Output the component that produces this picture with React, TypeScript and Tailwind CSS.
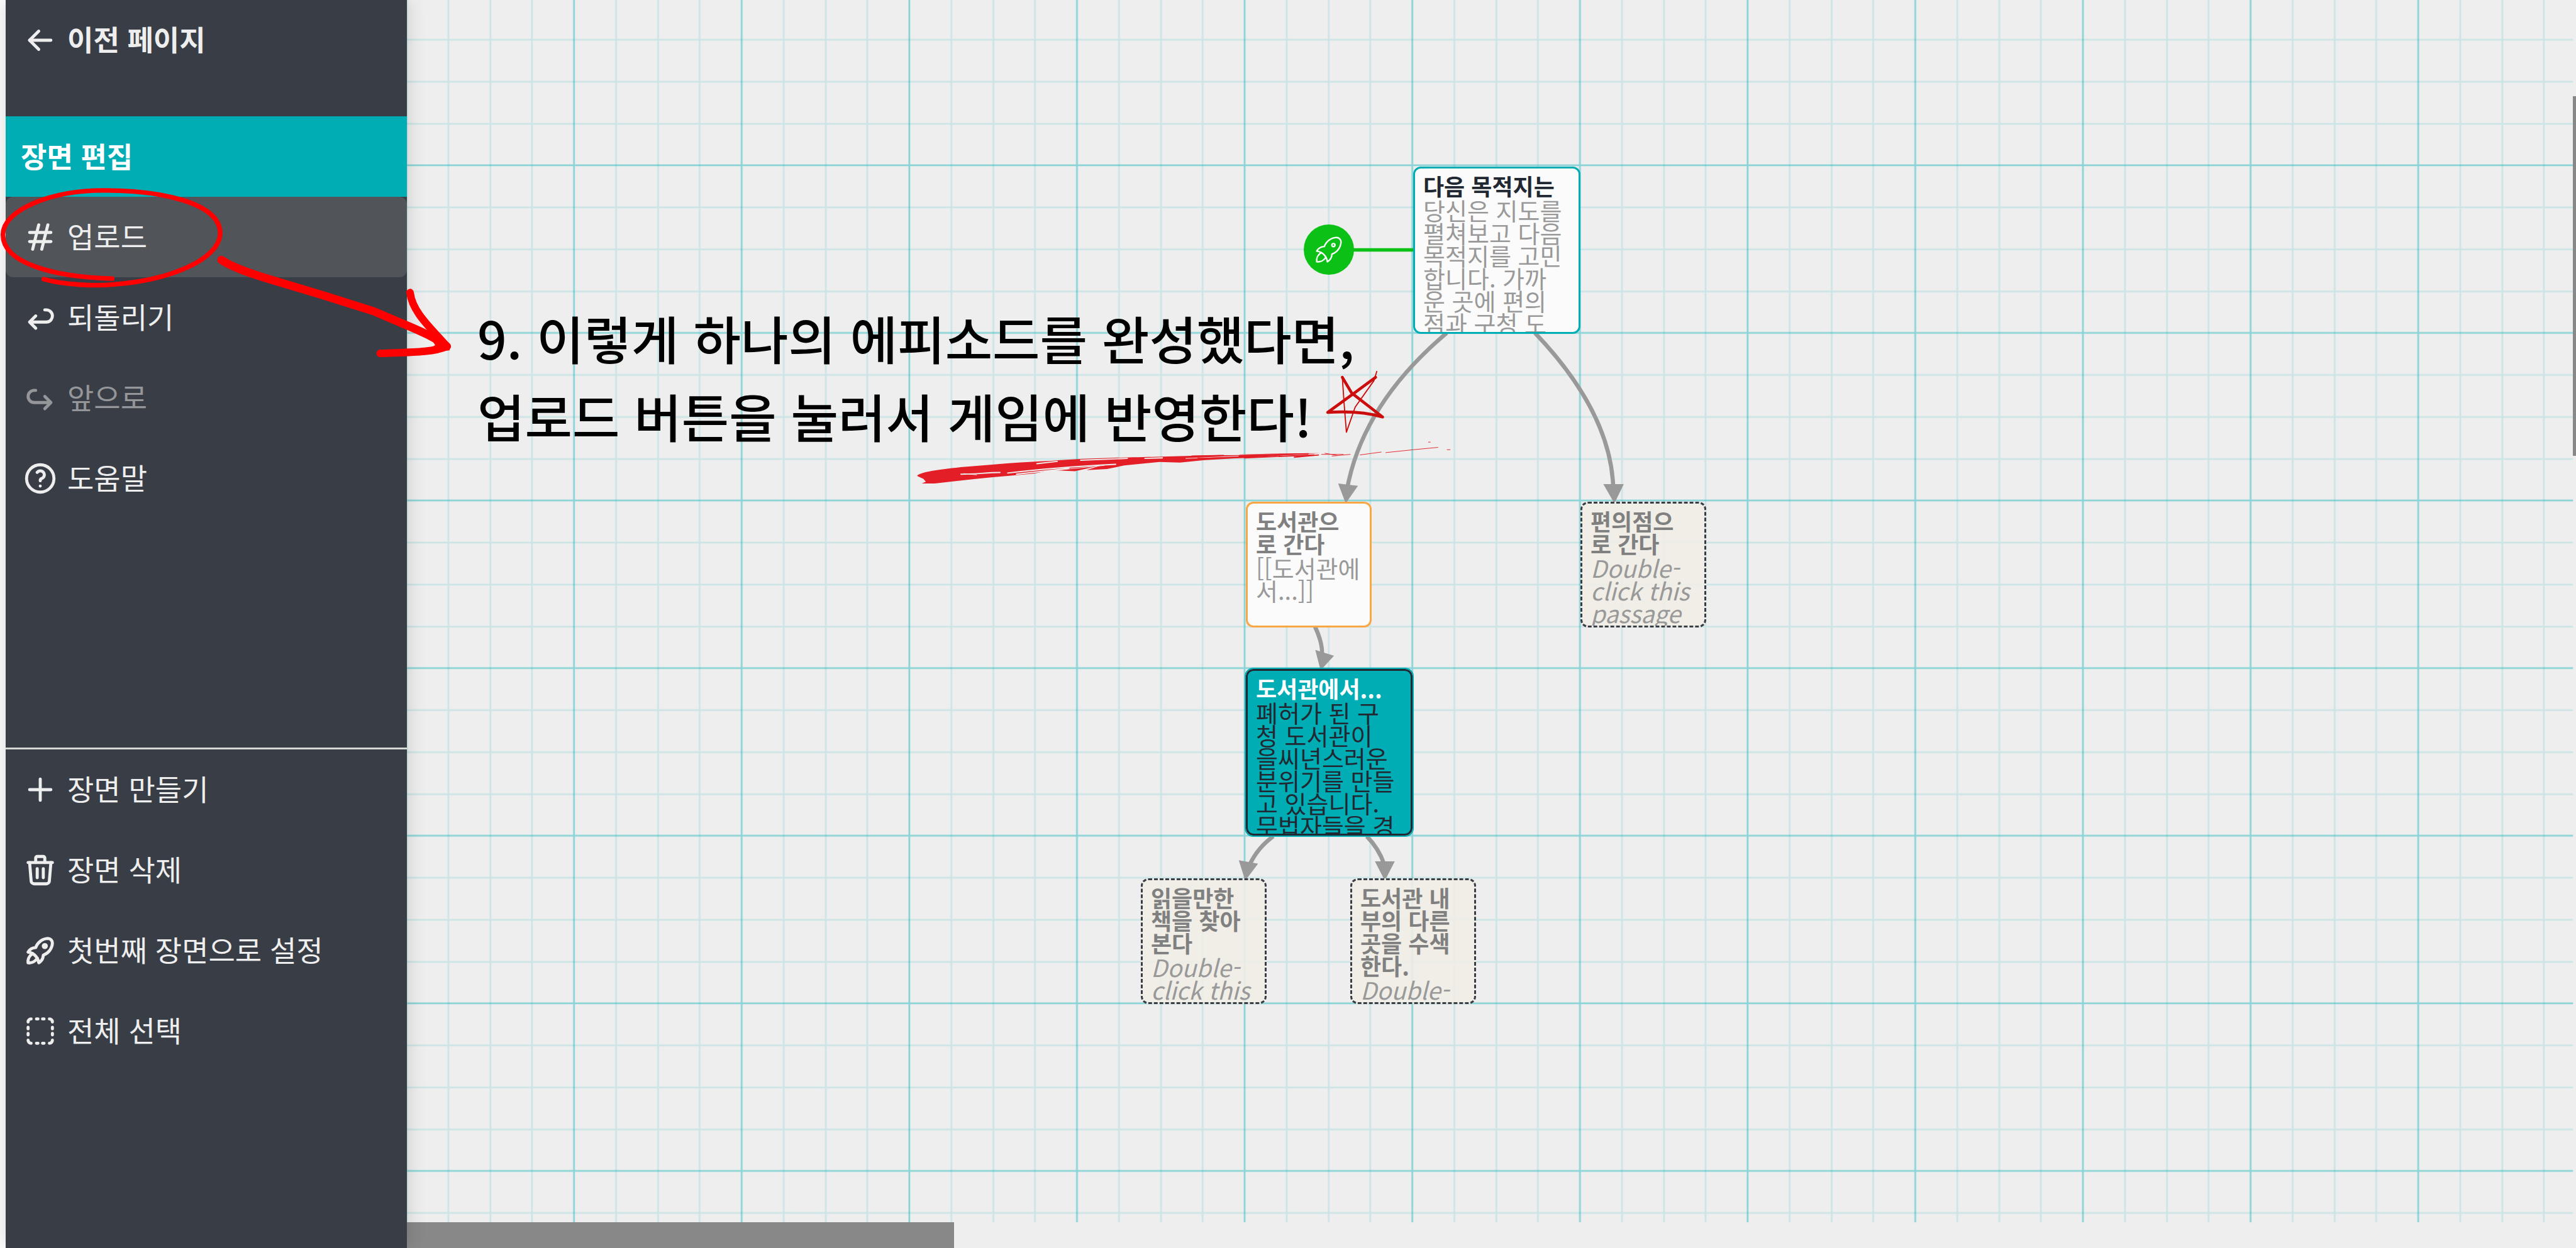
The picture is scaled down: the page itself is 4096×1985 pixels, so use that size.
import type { ReactNode } from "react";

type IconName = "back" | "hash" | "undo" | "redo" | "help" | "plus" | "trash" | "rocket" | "select";

const iconPaths: Record<IconName, string[]> = {
  back: ["M5 12h14", "M5 12l6 6", "M5 12l6-6"],
  hash: ["M5 9h14", "M5 15h14", "M11 4L7 20", "M17 4l-4 16"],
  undo: ["M9 11l-4 4l4 4m-4-4h11a4 4 0 0 0 0-8h-1"],
  redo: ["M15 11l4 4l-4 4m4-4H8a4 4 0 0 1 0-8h1"],
  help: [
    "M3 12a9 9 0 1 0 18 0a9 9 0 1 0-18 0",
    "M12 17v.01",
    "M12 13.5a1.5 1.5 0 0 1 1-1.5a2.6 2.6 0 1 0-3-4",
  ],
  plus: ["M12 5v14", "M5 12h14"],
  trash: [
    "M4 7h16",
    "M10 11v6",
    "M14 11v6",
    "M5 7l1 12a2 2 0 0 0 2 2h8a2 2 0 0 0 2-2l1-12",
    "M9 7V4a1 1 0 0 1 1-1h4a1 1 0 0 1 1 1v3",
  ],
  rocket: [
    "M4 13a8 8 0 0 1 7 7a6 6 0 0 0 3-5a9 9 0 0 0 6-8a3 3 0 0 0-3-3a9 9 0 0 0-8 6a6 6 0 0 0-5 3",
    "M7 14a6 6 0 0 0-3 6a6 6 0 0 0 6-3",
    "M14 9a1 1 0 1 0 2 0a1 1 0 1 0-2 0",
  ],
  select: [
    "M4 6a2 2 0 0 1 2-2",
    "M18 4a2 2 0 0 1 2 2",
    "M20 18a2 2 0 0 1-2 2",
    "M6 20a2 2 0 0 1-2-2",
    "M9.5 4h1M13.5 4h1M9.5 20h1M13.5 20h1",
    "M4 9.500v1M4 13.500v1M20 9.500v1M20 13.500v1",
  ],
};

function Icon({ name, className, weight = 2 }: { name: IconName; className: string; weight?: number }) {
  return (
    <svg
      viewBox="0 0 24 24"
      fill="none"
      stroke="currentColor"
      strokeWidth={weight}
      strokeLinecap="round"
      strokeLinejoin="round"
      className={className}
      aria-hidden="true"
    >
      {iconPaths[name].map((d) => (
        <path key={d} d={d} />
      ))}
    </svg>
  );
}

type Tone = "plain" | "active" | "disabled" | "strong";

const toneClasses: Record<Tone, string> = {
  plain: "text-[46px] text-[#eeeeee]",
  active: "rounded-[12px] bg-[#515459] text-[46px] text-[#eeeeee]",
  disabled: "text-[46px] text-[#949699]",
  strong: "text-[45px] font-bold text-[#eeeeee]",
};

function MenuButton({ icon, tone = "plain", children }: { icon: IconName; tone?: Tone; children: ReactNode }) {
  return (
    <button
      type="button"
      disabled={tone === "disabled"}
      className={`flex h-32 w-full items-center gap-[14px] pl-[26px] text-left leading-none whitespace-nowrap ${toneClasses[tone]}`}
    >
      <Icon name={icon} className="size-[58px] shrink-0" />
      <span className="pb-[6px]">{children}</span>
    </button>
  );
}

function Sidebar() {
  return (
    <aside className="relative z-10 flex w-[638px] shrink-0 flex-col bg-[#393e46] shadow-[0_0_28px_rgba(0,0,0,0.16)]">
      <MenuButton icon="back" tone="strong">이전 페이지</MenuButton>
      <h1 className="mt-[57px] flex h-32 items-center bg-[#00adb5] pb-1 pl-[24px] text-[45px] leading-none font-bold text-white">
        장면 편집
      </h1>
      <nav>
        <MenuButton icon="hash" tone="active">업로드</MenuButton>
        <MenuButton icon="undo">되돌리기</MenuButton>
        <MenuButton icon="redo" tone="disabled">앞으로</MenuButton>
        <MenuButton icon="help">도움말</MenuButton>
      </nav>
      <nav className="mt-[364px] border-t-[3px] border-[#d6d8d6]">
        <MenuButton icon="plus">장면 만들기</MenuButton>
        <MenuButton icon="trash">장면 삭제</MenuButton>
        <MenuButton icon="rocket">첫번째 장면으로 설정</MenuButton>
        <MenuButton icon="select">전체 선택</MenuButton>
      </nav>
    </aside>
  );
}

function GridAndLinks() {
  return (
    <svg viewBox="697 0 3713 2137" className="absolute top-0 left-0 h-[1985px] w-[3449px]" aria-hidden="true">
      <defs>
        <pattern id="grid" x="981" y="-6" width="287" height="287" patternUnits="userSpaceOnUse">
          <path d="M74 0V287M146 0V287M217 0V287M0 74H287M0 146H287M0 218H287" stroke="#00adb5" strokeOpacity="0.14" strokeWidth="3" />
          <path d="M2 0V287M0 2H287" stroke="#00adb5" strokeOpacity="0.42" strokeWidth="3" />
        </pattern>
      </defs>
      <rect x="690" y="0" width="3715" height="2093" fill="url(#grid)" />
      <g fill="none" stroke="#999999" strokeWidth="7">
        <path d="M2477 570Q2335 690 2307 834" />
        <path d="M2628 570Q2757 705 2762 834" />
        <path d="M2251 1072Q2266 1104 2263 1124" />
        <path d="M2180 1432Q2153 1452 2140 1480" />
        <path d="M2340 1432Q2360 1452 2370 1480" />
      </g>
      <g fill="#999999">
        <path d="M2291 828L2325 832L2304 862Z" />
        <path d="M2745 829H2780L2764 862Z" />
        <path d="M2252 1113L2284 1123L2261 1148Z" />
        <path d="M2121 1473L2154 1479L2132 1508Z" />
        <path d="M2354 1475H2388L2371 1508Z" />
      </g>
      <path d="M2275 428H2420" stroke="#0cc115" strokeWidth="6" />
    </svg>
  );
}

type Passage = {
  id: string;
  box: string;
  titleClass: string;
  title: string[];
  bodyClass: string;
  body: string[];
};

const passages: Passage[] = [
  {
    id: "next-destination",
    box: "left-[1600px] top-[265px] size-[266px] border-[#00adb5] bg-[#fbfbfb]",
    titleClass: "text-[#222831]",
    title: ["다음 목적지는"],
    bodyClass: "text-[#999999]",
    body: ["당신은 지도를", "펼쳐보고 다음", "목적지를 고민", "합니다. 가까", "운 곳에 편의", "점과 구청 도"],
  },
  {
    id: "go-library",
    box: "left-[1334px] top-[798px] size-[200px] border-[#f9a644] bg-[#fbfbfb]",
    titleClass: "text-[#808080]",
    title: ["도서관으", "로 간다"],
    bodyClass: "text-[#999999]",
    body: ["[[도서관에", "서...]]"],
  },
  {
    id: "go-store",
    box: "left-[1866px] top-[798px] size-[200px] border-dashed border-[#393e46] bg-[#f0ede6]/90",
    titleClass: "text-[#808080]",
    title: ["편의점으", "로 간다"],
    bodyClass: "text-[#999999] italic",
    body: ["Double-", "click this", "passage"],
  },
  {
    id: "in-library",
    box: "left-[1334px] top-[1064px] size-[265px] border-[#222831] bg-[#00adb5] outline-2 outline-[#00adb5]",
    titleClass: "text-white",
    title: ["도서관에서..."],
    bodyClass: "text-[#222831]",
    body: ["폐허가 된 구", "청 도서관이", "을씨년스러운", "분위기를 만들", "고 있습니다.", "무법자들을 경"],
  },
  {
    id: "find-book",
    box: "left-[1167px] top-[1397px] size-[200px] border-dashed border-[#393e46] bg-[#f0ede6]/90",
    titleClass: "text-[#808080]",
    title: ["읽을만한", "책을 찾아", "본다"],
    bodyClass: "text-[#999999] italic",
    body: ["Double-", "click this"],
  },
  {
    id: "search-elsewhere",
    box: "left-[1500px] top-[1397px] size-[200px] border-dashed border-[#393e46] bg-[#f0ede6]/90",
    titleClass: "text-[#808080]",
    title: ["도서관 내", "부의 다른", "곳을 수색", "한다."],
    bodyClass: "text-[#999999] italic",
    body: ["Double-"],
  },
];

function PassageCard({ passage }: { passage: Passage }) {
  return (
    <article className={`absolute overflow-hidden rounded-[12px] border-[3px] px-[13px] pt-[9px] whitespace-nowrap ${passage.box}`}>
      <h2 className={`text-[36px] leading-[36px] font-bold ${passage.titleClass}`}>
        {passage.title.map((line) => (
          <span key={line} className="block">{line}</span>
        ))}
      </h2>
      <p className={`mt-[3px] text-[38px] leading-[36px] ${passage.bodyClass}`}>
        {passage.body.map((line) => (
          <span key={line} className="block">{line}</span>
        ))}
      </p>
    </article>
  );
}

function StoryMap() {
  return (
    <main className="relative flex-1 overflow-hidden bg-[#eeeeee]">
      <GridAndLinks />
      <div className="absolute top-[357px] left-[1426px] flex size-[80px] items-center justify-center rounded-full bg-[#0cc115] text-white">
        <Icon name="rocket" weight={1} className="size-[58px]" />
      </div>
      {passages.map((p) => (
        <PassageCard key={p.id} passage={p} />
      ))}
      <div className="absolute bottom-0 left-0 h-[41px] w-[870px] bg-[#888888]" />
      <div className="absolute top-[153px] right-0 h-[572px] w-[5px] bg-[#888888]" />
    </main>
  );
}

function Annotations() {
  return (
    <div className="pointer-events-none absolute inset-0 z-20 overflow-hidden">
      <svg viewBox="0 0 4410 2137" className="absolute top-0 left-0 h-[1985px] w-[4096px]" aria-hidden="true">
        <g fill="none" stroke="#ff0000" strokeLinecap="round" strokeLinejoin="round">
          <path d="M75 478C110 488 165 490 195 487C290 480 375 445 377 400C377 345 270 326 178 326C85 326 5 360 5 402C5 450 90 474 192 477" strokeWidth="8" />
          <path d="M379 445C395 456 430 469 468 480L561 508L640 533L694 556C720 567 745 578 765 593" strokeWidth="14" />
          <path d="M702 501C706 535 738 562 765 593" strokeWidth="13" />
          <path d="M651 605C700 603 740 604 765 593" strokeWidth="13" />
        </g>
        <path d="M735 575L765 584L770 600L725 603L745 591Z" fill="#ff0000" />
        <g fill="none" stroke="#cc0d0d" strokeLinecap="round" strokeLinejoin="round">
          <path d="M2298 646L2314 673L2367 714C2340 706 2305 704 2273 706L2320 672L2355 646" strokeWidth="5" />
          <path d="M2357 636L2352 652L2320 697L2305 740L2301 690L2298 646" strokeWidth="2" />
        </g>
        <path
          d="M1570 815C1574 808 1610 804 1645 800C1700 795 1750 791 1800 789C1850 785 1930 783 1980 782L2060 780L2170 777L2260 776L2195 780L2110 785L2060 788L2020 792L1985 791L1925 797L1895 803L1860 805L1885 797L1840 807L1800 805L1770 811L1725 815L1700 817L1670 820L1600 828L1578 828L1585 825L1581 820Z"
          fill="#e31e26"
        />
        <g fill="none" stroke="#eeeeee" strokeLinecap="round">
          <path d="M1645 812C1670 812 1690 809 1712 809M1775 794L1810 790M1725 810C1790 802 1850 798 1910 795M1740 812L1830 802M1850 788L1930 785M1960 785L1990 784" strokeWidth="2" />
          <path d="M2030 785L2120 781M2090 779L2210 778M1790 807L1890 797M1650 811L1672 813" strokeWidth="1" />
        </g>
        <g fill="none" stroke="#e31e26">
          <path d="M2040 781L2095 780M2050 785L2130 783M2122 780L2240 777M2130 784L2250 779M2215 783L2258 779" strokeWidth="2" />
          <path d="M2262 778H2300M2280 781L2312 778M2328 779L2365 774M2372 775L2420 770L2462 766M2477 770H2483M2445 757H2449M2268 776L2290 780" strokeWidth="1" />
        </g>
      </svg>
      <p className="absolute top-[475px] left-[759px] text-[82px] leading-[124px] font-medium whitespace-nowrap text-black">
        9. 이렇게 하나의 에피소드를 완성했다면,
        <br />
        업로드 버튼을 눌러서 게임에 반영한다!
      </p>
    </div>
  );
}

export default function App() {
  return (
    <div
      lang="ko"
      className="relative flex h-screen overflow-hidden bg-white pl-[9px] font-['Noto_Sans_CJK_KR','Liberation_Sans',sans-serif]"
    >
      <Sidebar />
      <StoryMap />
      <Annotations />
    </div>
  );
}
